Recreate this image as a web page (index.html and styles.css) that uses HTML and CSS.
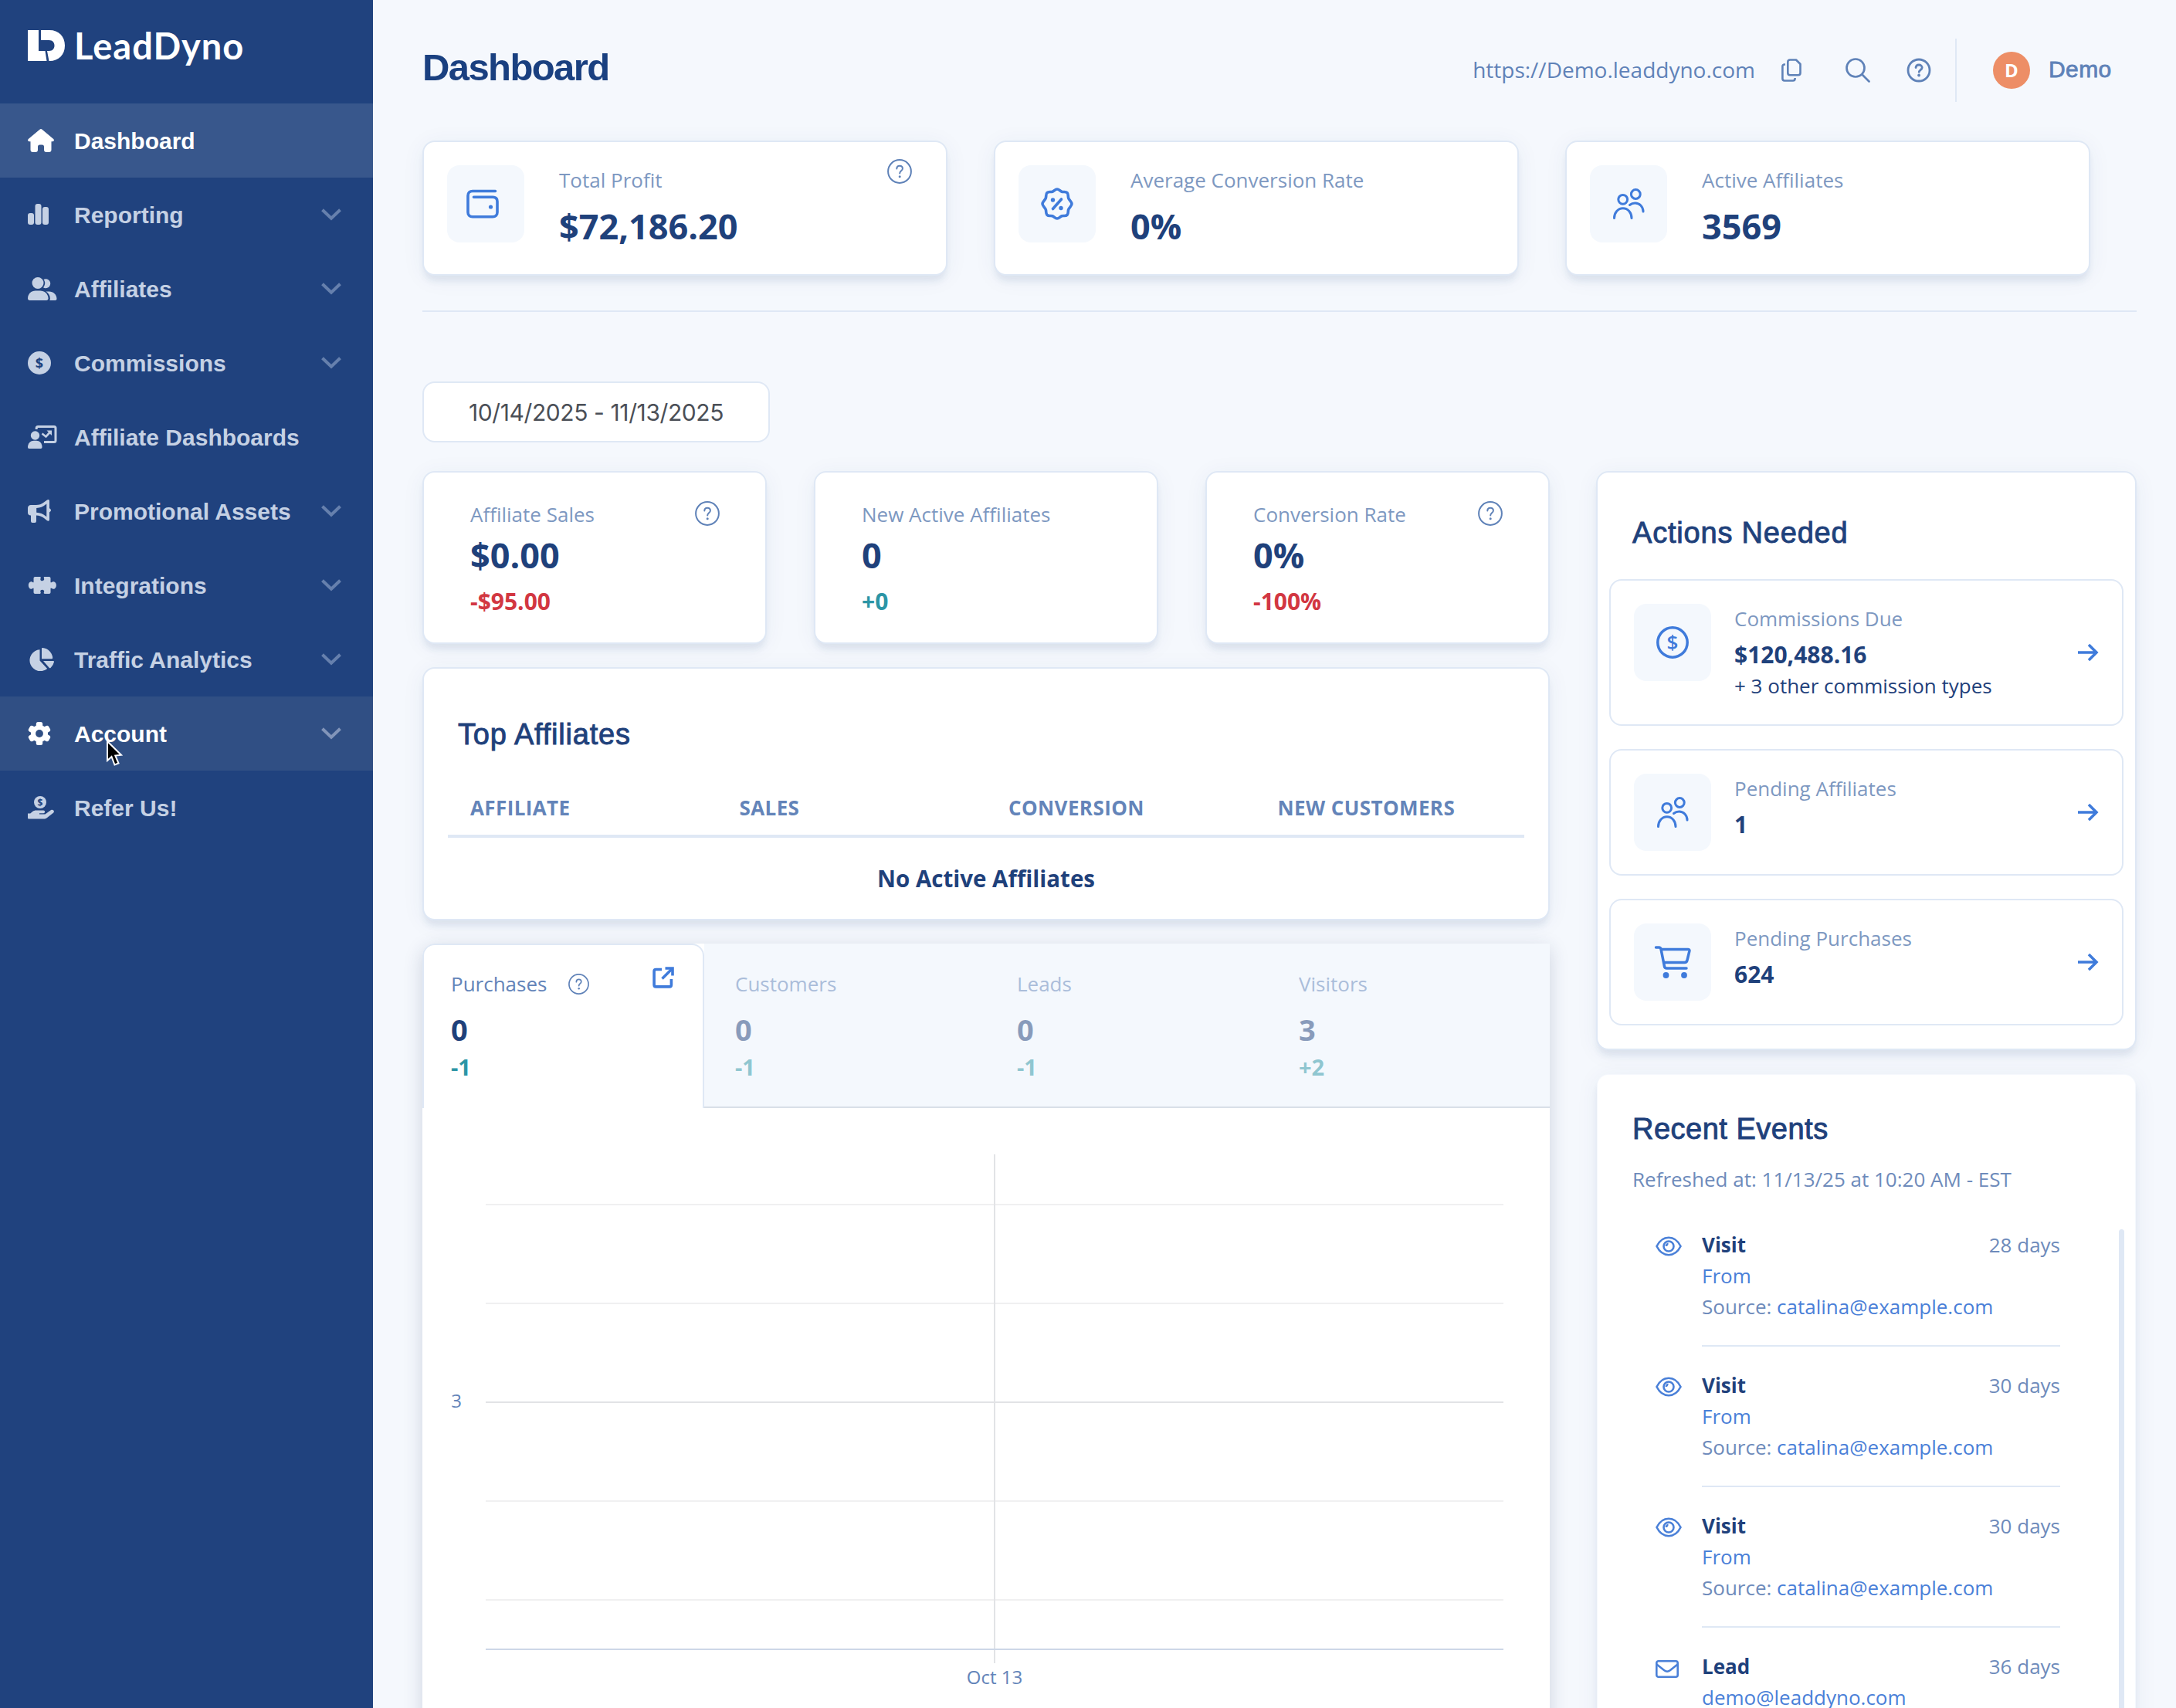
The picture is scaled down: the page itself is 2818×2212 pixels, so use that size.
FILE: index.html
```
<!DOCTYPE html>
<html lang="en">
<head>
  <meta charset="UTF-8">
  <meta name="viewport" content="width=device-width, initial-scale=1.0">
  <title>LeadDyno - Dashboard</title>
  <link rel="stylesheet" href="styles.css">
</head>
<body>
  <!-- shared icons -->
  <svg class="sprite" aria-hidden="true">
    <symbol id="chevron" viewBox="0 0 26 16"><path d="M1.500 1.800L13 12.800 24.500 1.800" fill="none" stroke="currentColor" stroke-width="4"/></symbol>
    <symbol id="help" viewBox="0 0 32 32">
      <circle cx="16" cy="16" r="14.900" fill="none" stroke="currentColor" stroke-width="2"/>
      <path d="M12.300 12.600c0-2.300 1.600-3.900 3.800-3.900s3.800 1.500 3.800 3.500c0 3.200-3.700 3.100-3.700 6.300" fill="none" stroke="currentColor" stroke-width="2" stroke-linecap="round"/>
      <circle cx="16.200" cy="22.800" r="1.500" fill="currentColor"/>
    </symbol>
    <symbol id="people" viewBox="0 0 42 42">
      <g fill="none" stroke="currentColor" stroke-width="3" stroke-linecap="round">
        <circle cx="13.700" cy="15.300" r="5.900"/>
        <circle cx="30.300" cy="8.500" r="5.900"/>
        <path d="M2.500 39.500c0-7 4.800-12.800 11.300-12.800S25 32.500 25 39.500"/>
        <path d="M22.500 22.500c2-1.600 4.500-2.500 7-2.500 6 0 10.500 4.800 10.500 11"/>
      </g>
    </symbol>
    <symbol id="arrow" viewBox="0 0 28 24"><path d="M1 12h23M15 2l10 10-10 10" fill="none" stroke="currentColor" stroke-width="3.600"/></symbol>
    <symbol id="eye" viewBox="0 0 34 28">
      <g fill="none" stroke="currentColor" stroke-width="2.600">
        <path d="M1.500 14C5 7 10.500 2.800 17 2.800S29 7 32.500 14C29 21 23.500 25.200 17 25.200S5 21 1.500 14z"/>
        <circle cx="17" cy="14" r="6.500"/>
      </g>
      <path d="M16.500 9.500a3.500 3.500 0 0 1-4 4.500c.2-2.500 1.700-4.200 4-4.500z" fill="currentColor"/>
    </symbol>
  </svg>

  <div class="app">
    <aside class="sidebar">
      <div class="brand">
        <svg width="48" height="40" viewBox="0 0 48 40" fill="#fff">
          <path d="M0 0h14v27h8.500l2 13H0z"/>
          <path d="M17 0h11c12 0 20 8 20 20s-8 20-20 20h-.5L25 27h2.500c4.500 0 7-2.800 7-7s-2.500-7-7-7H17z"/>
        </svg>
        <span>LeadDyno</span>
      </div>
      <nav>
        <a class="nav-item active">
          <span class="nav-icon"><svg width="34" height="30" viewBox="0 0 34 30" fill="currentColor"><path d="M15.400.7a2.500 2.500 0 0 1 3.200 0L33.200 13c1.400 1.200.6 3.200-1.200 3.200H30.500V27a3 3 0 0 1-3 3H24a3 3 0 0 1-3-3v-4a2.500 2.500 0 0 0-2.500-2.500h-3A2.500 2.500 0 0 0 13 23v4a3 3 0 0 1-3 3H6.500a3 3 0 0 1-3-3V16.200H2C.2 16.200-.6 14.200.8 13z"/></svg></span>
          <span class="nav-label">Dashboard</span>
        </a>
        <a class="nav-item">
          <span class="nav-icon"><svg width="28" height="28" viewBox="0 0 28 28" fill="currentColor"><rect y="12" width="8" height="15" rx="3"/><rect x="9.500" y="0" width="8" height="27" rx="3"/><rect x="19" y="4" width="8" height="23" rx="3"/></svg></span>
          <span class="nav-label">Reporting</span>
          <svg class="nav-chevron"><use href="#chevron"/></svg>
        </a>
        <a class="nav-item">
          <span class="nav-icon"><svg width="38" height="30" viewBox="0 0 38 30" fill="currentColor"><circle cx="13" cy="7.500" r="7.500"/><path d="M0 27.500C0 21.500 4.500 17.500 10 17.500h6c5.500 0 10.500 4 10.500 10 0 1.500-1 2.500-2.500 2.500H2.500C1 30 0 29 0 27.500z"/><path d="M20.500 2.900A6 6 0 1 1 20 13.300c1.400-1.600 2.200-3.600 2.200-5.800 0-1.700-.6-3.300-1.700-4.600z"/><path d="M23.500 18.500h4c5.500 0 10 4 10 9.500 0 1.300-.8 2-2 2h-7.300c.5-.8.700-1.600.7-2.600 0-3.500-2-6.700-5.400-8.900z"/></svg></span>
          <span class="nav-label">Affiliates</span>
          <svg class="nav-chevron"><use href="#chevron"/></svg>
        </a>
        <a class="nav-item">
          <span class="nav-icon"><svg width="30" height="30" viewBox="0 0 30 30"><circle cx="15" cy="15" r="15" fill="currentColor"/><text x="15" y="21.500" class="coin-text">$</text></svg></span>
          <span class="nav-label">Commissions</span>
          <svg class="nav-chevron"><use href="#chevron"/></svg>
        </a>
        <a class="nav-item">
          <span class="nav-icon"><svg width="38" height="30" viewBox="0 0 38 30" fill="currentColor"><circle cx="9.500" cy="13" r="5.700"/><path d="M0 28c0-5 3.500-8.300 8-8.300h3c4.500 0 7.500 3.300 7.500 8.300 0 1.200-.6 2-1.700 2H1.700C.6 30 0 29.200 0 28z"/><path d="M11.200 5V3.500c0-1.200.8-2 2-2h20.800c1.200 0 2 .8 2 2v16c0 1.200-.8 2-2 2H21" fill="none" stroke="currentColor" stroke-width="3"/><path d="M18.500 10.500l5 4 5.500-6" fill="none" stroke="currentColor" stroke-width="2.600"/><path d="M24.500 6.500h6.500v6.500z"/></svg></span>
          <span class="nav-label">Affiliate Dashboards</span>
        </a>
        <a class="nav-item">
          <span class="nav-icon"><svg width="30" height="30" viewBox="0 0 30 30" fill="currentColor"><path fill-rule="evenodd" d="M28 1.700v9.500c1.200.7 2 1.500 2 2.600s-.8 1.900-2 2.600V26c0 1.700-1.800 2.300-3 1.300l-4-3.200a17 17 0 0 0-10-3.600V28a2 2 0 0 1-2 2H6a2 2 0 0 1-2-2v-7.500A3.900 3.900 0 0 1 0 16.700V11c0-2.200 1.700-3.900 3.900-3.900h6.800c3.800 0 7.300-1.300 10.200-3.600L25 .5c1.300-1 3-.5 3 1.200zM24.300 5.500l-1 .8A20 20 0 0 1 11.200 11v5.800c4.400.2 8.600 1.800 12.100 4.600l1 .8z"/></svg></span>
          <span class="nav-label">Promotional Assets</span>
          <svg class="nav-chevron"><use href="#chevron"/></svg>
        </a>
        <a class="nav-item">
          <span class="nav-icon"><svg width="38" height="22" viewBox="0 0 38 23" fill="currentColor"><path d="M9 0h6.500c1 0 1.500 1 1 2-.8 1.700 0 3.500 2.200 3.500S21.800 3.700 21 2c-.5-1 0-2 1-2h6c1.200 0 2 .8 2 2v5.500h1.500C32.300 6.700 33 6.500 34 6.500c2.200 0 3.700 2.400 3.700 5s-1.500 5-3.700 5c-1 0-1.700-.2-2.500-1H30V21c0 1.200-.8 2-2 2h-6c-1 0-1.500-1-1-2 .8-1.700 0-3.500-2.300-3.500s-3 1.800-2.200 3.500c.5 1 0 2-1 2H9c-1.200 0-2-.8-2-2v-5.500H6c-.8.800-1.500 1-2.400 1-2.200 0-3.600-2.400-3.600-5s1.400-5 3.600-5c.9 0 1.600.2 2.400 1h1V2c0-1.200.8-2 2-2z"/></svg></span>
          <span class="nav-label">Integrations</span>
          <svg class="nav-chevron"><use href="#chevron"/></svg>
        </a>
        <a class="nav-item">
          <span class="nav-icon"><svg width="34" height="30" viewBox="0 0 34 30" fill="currentColor"><path d="M15.500 2.200v14.300l9.700 10.600A14 14 0 1 1 15.500 2.200z"/><path d="M18 1.300c0-.8.500-1.300 1.300-1.200A14 14 0 0 1 32.200 13c0 .8-.5 1.200-1.300 1.200H18z"/><path d="M20 17h13c.7 0 1.100.5 1 1.300a14 14 0 0 1-4.500 7.700c-.5.500-1.100.4-1.600-.1z"/></svg></span>
          <span class="nav-label">Traffic Analytics</span>
          <svg class="nav-chevron"><use href="#chevron"/></svg>
        </a>
        <a class="nav-item hover">
          <span class="nav-icon"><svg width="30" height="30" viewBox="0 0 30 30"><g fill="currentColor"><circle cx="15" cy="15" r="11"/><rect x="10.800" y="0" width="8.400" height="30" rx="2.500"/><rect x="10.800" y="0" width="8.400" height="30" rx="2.500" transform="rotate(60 15 15)"/><rect x="10.800" y="0" width="8.400" height="30" rx="2.500" transform="rotate(120 15 15)"/></g><circle cx="15" cy="15" r="4.900" fill="#304f84"/></svg></span>
          <span class="nav-label">Account</span>
          <svg class="nav-chevron"><use href="#chevron"/></svg>
          <svg class="cursor" width="24" height="36" viewBox="0 0 24 36"><path d="M2 2v25l5.500-5 4 10.500 5-2-4.200-10 7.700-.8z" fill="#000" stroke="#fff" stroke-width="2"/></svg>
        </a>
        <a class="nav-item">
          <span class="nav-icon"><svg width="34" height="30" viewBox="0 0 34 30" fill="currentColor"><circle cx="16" cy="8" r="8"/><text x="16" y="12.500" class="coin-text small">$</text><path d="M0 22.500h3.200l3-2.500c1.300-1 2.800-1.500 4.400-1.500h9.600c2.600 0 2.600 3.700 0 3.700H15v1.200h7.500l7.600-5.300c2.600-1.600 5.200 1.500 2.900 3.600l-8 6.300c-1.300 1-2.800 1.600-4.500 1.600H1.500C.6 29.600 0 29 0 28z"/></svg></span>
          <span class="nav-label">Refer Us!</span>
        </a>
      </nav>
    </aside>

    <main class="main">
      <header class="topbar">
        <h1>Dashboard</h1>
        <div class="topbar-tools">
          <span class="site-url">https://Demo.leaddyno.com</span>
          <svg class="copy" width="26" height="30" viewBox="0 0 26 30" fill="none" stroke="currentColor" stroke-width="2.600" stroke-linejoin="round"><path d="M11 1.500h8l5.500 5.500v11.500c0 1.700-1 2.700-2.700 2.700H11c-1.700 0-2.700-1-2.700-2.700V4.200c0-1.700 1-2.700 2.700-2.700z"/><path d="M5 7.500H4C2.400 7.500 1.400 8.500 1.400 10v15.800c0 1.700 1 2.700 2.700 2.700h10.800c1.700 0 2.700-1 2.700-2.700V25"/></svg>
          <svg class="search" width="32" height="32" viewBox="0 0 32 32" fill="none" stroke="currentColor" stroke-width="2.700" stroke-linecap="round"><circle cx="13" cy="13" r="11.500"/><path d="M21.500 21.500l9 9"/></svg>
          <svg class="top-help" width="32" height="32" viewBox="0 0 32 32"><circle cx="16" cy="16" r="14" fill="none" stroke="currentColor" stroke-width="2.800"/><path d="M12 12.500c.3-2.300 1.700-3.500 4-3.500s4.200 1.400 4.200 3.600c0 2.900-4 3-4 5.700" fill="none" stroke="currentColor" stroke-width="2.800" stroke-linecap="round"/><circle cx="16.100" cy="22.500" r="1.900" fill="currentColor"/></svg>
          <div class="user">
            <span class="avatar">D</span>
            <span class="user-name">Demo</span>
          </div>
        </div>
      </header>

      <section class="summary">
        <div class="card summary-card">
          <div class="icon-box wallet"><svg width="42" height="38" viewBox="0 0 42 38" fill="none" stroke="currentColor" stroke-width="3.600" stroke-linecap="round"><path d="M37.500 2.500H8c-3.700 0-6 2.300-6 6V30c0 3.500 2.300 5.700 6 5.700h26c3.700 0 6-2.200 6-5.700V16c0-3.600-2.300-5.700-6-5.700H9.500"/><circle cx="31.500" cy="23" r="2.600" fill="currentColor" stroke="none"/></svg></div>
          <div class="summary-text">
            <div class="label">Total Profit</div>
            <div class="value">$72,186.20</div>
          </div>
          <svg class="help"><use href="#help"/></svg>
        </div>
        <div class="card summary-card">
          <div class="icon-box"><svg width="42" height="42" viewBox="0 0 42 42" fill="none" stroke="currentColor" stroke-width="3.600" stroke-linecap="round" stroke-linejoin="round"><path d="M21 2c2.600 0 3.700 2.500 6 3.300 2.300.8 5-.6 7 1.300 1.900 1.900.9 4.700 1.700 7S40 18.400 40 21s-3.500 5-4.300 7.400c-.8 2.300.2 5.100-1.700 7-2 1.900-4.700.5-7 1.300-2.300.8-3.400 3.300-6 3.300s-3.700-2.500-6-3.300c-2.300-.8-5 .6-7-1.300-1.900-1.900-.9-4.700-1.700-7C5.500 26 2 23.600 2 21s3.500-5 4.300-7.400c.8-2.300-.2-5.100 1.700-7 2-1.900 4.700-.5 7-1.300C17.300 4.500 18.400 2 21 2z"/><path d="M26.500 15l-11 12.500"/><circle cx="15.500" cy="16" r="2.700" fill="currentColor" stroke="none"/><circle cx="26" cy="26.500" r="2.700" fill="currentColor" stroke="none"/></svg></div>
          <div class="summary-text">
            <div class="label">Average Conversion Rate</div>
            <div class="value">0%</div>
          </div>
        </div>
        <div class="card summary-card">
          <div class="icon-box"><svg width="42" height="42"><use href="#people"/></svg></div>
          <div class="summary-text">
            <div class="label">Active Affiliates</div>
            <div class="value">3569</div>
          </div>
        </div>
      </section>

      <div class="date-range">10/14/2025 - 11/13/2025</div>

      <div class="columns">
        <div class="col-left">
          <div class="stats">
            <div class="card stat">
              <div class="stat-head"><span class="label">Affiliate Sales</span><svg class="help"><use href="#help"/></svg></div>
              <div class="value">$0.00</div>
              <div class="delta down">-$95.00</div>
            </div>
            <div class="card stat">
              <div class="stat-head"><span class="label">New Active Affiliates</span></div>
              <div class="value">0</div>
              <div class="delta up">+0</div>
            </div>
            <div class="card stat">
              <div class="stat-head"><span class="label">Conversion Rate</span><svg class="help"><use href="#help"/></svg></div>
              <div class="value">0%</div>
              <div class="delta down">-100%</div>
            </div>
          </div>

          <div class="card top-affiliates">
            <h2>Top Affiliates</h2>
            <table>
              <thead>
                <tr>
                  <th>Affiliate</th>
                  <th>Sales</th>
                  <th>Conversion</th>
                  <th>New Customers</th>
                </tr>
              </thead>
              <tbody>
                <tr>
                  <td colspan="4">No Active Affiliates</td>
                </tr>
              </tbody>
            </table>
          </div>

          <div class="chart-card">
            <div class="tabs">
              <div class="tab selected">
                <div class="tab-label">Purchases <svg class="help"><use href="#help"/></svg>
                  <svg class="open" width="28" height="28" viewBox="0 0 28 28" fill="none" stroke="currentColor" stroke-width="3.600"><path d="M12 3.500H4.500c-1.500 0-2.400.9-2.400 2.400V23.500c0 1.500.9 2.400 2.400 2.400H22c1.500 0 2.400-.9 2.400-2.400V16"/><path d="M12.500 15.500L25 3"/><path d="M16.500 2h9.500v9.500"/></svg>
                </div>
                <div class="tab-value">0</div>
                <div class="tab-delta">-1</div>
              </div>
              <div class="tab">
                <div class="tab-label">Customers</div>
                <div class="tab-value">0</div>
                <div class="tab-delta">-1</div>
              </div>
              <div class="tab">
                <div class="tab-label">Leads</div>
                <div class="tab-value">0</div>
                <div class="tab-delta">-1</div>
              </div>
              <div class="tab">
                <div class="tab-label">Visitors</div>
                <div class="tab-value">3</div>
                <div class="tab-delta">+2</div>
              </div>
            </div>
            <svg class="chart" width="1460" height="777" viewBox="0 0 1460 777">
              <g class="grid-minor">
                <path d="M82 125H1400M82 253H1400M82 509H1400M82 637H1400"/>
              </g>
              <path class="grid-major" d="M82 381H1400M741 60V719"/>
              <path class="axis" d="M82 701H1400"/>
              <text x="51" y="388" text-anchor="end">3</text>
              <text x="741" y="746" text-anchor="middle">Oct 13</text>
            </svg>
          </div>
        </div>

        <div class="col-right">
          <div class="card actions">
            <h2>Actions Needed</h2>
            <div class="action">
              <div class="icon-box"><svg width="42" height="42" viewBox="0 0 42 42"><circle cx="21" cy="21" r="19.200" fill="none" stroke="currentColor" stroke-width="3.500"/><text x="21" y="30.200" class="dollar">$</text></svg></div>
              <div class="action-text">
                <div class="label">Commissions Due</div>
                <div class="action-value">$120,488.16</div>
                <div class="action-note">+ 3 other commission types</div>
              </div>
              <svg class="arrow"><use href="#arrow"/></svg>
            </div>
            <div class="action">
              <div class="icon-box"><svg width="42" height="42"><use href="#people"/></svg></div>
              <div class="action-text">
                <div class="label">Pending Affiliates</div>
                <div class="action-value">1</div>
              </div>
              <svg class="arrow"><use href="#arrow"/></svg>
            </div>
            <div class="action">
              <div class="icon-box"><svg width="48" height="42" viewBox="0 0 48 42" fill="none" stroke="currentColor" stroke-width="3.500" stroke-linecap="round" stroke-linejoin="round"><path d="M2.500 2h4c1.500 0 2.200.8 2.500 2.200l4.500 22.500c.3 1.600 1.300 2.400 3 2.400H42"/><path d="M9.500 4.500H44c1.500 0 2.200.8 1.900 2.200L43 18.500c-.4 1.800-1.700 3-3.500 3H13"/><circle cx="15.500" cy="38" r="3.900" fill="currentColor" stroke="none"/><circle cx="39" cy="38" r="3.900" fill="currentColor" stroke="none"/></svg></div>
              <div class="action-text">
                <div class="label">Pending Purchases</div>
                <div class="action-value">624</div>
              </div>
              <svg class="arrow"><use href="#arrow"/></svg>
            </div>
          </div>

          <div class="card recent">
            <h2>Recent Events</h2>
            <div class="refreshed">Refreshed at: 11/13/25 at 10:20 AM - EST</div>
            <div class="events">
              <div class="event-list">
                <div class="event">
                  <svg class="event-icon"><use href="#eye"/></svg>
                  <div class="event-body">
                    <div class="event-head"><b>Visit</b><span>28 days</span></div>
                    <div><a>From</a></div>
                    <div>Source: <a>catalina@example.com</a></div>
                  </div>
                </div>
                <div class="event">
                  <svg class="event-icon"><use href="#eye"/></svg>
                  <div class="event-body">
                    <div class="event-head"><b>Visit</b><span>30 days</span></div>
                    <div><a>From</a></div>
                    <div>Source: <a>catalina@example.com</a></div>
                  </div>
                </div>
                <div class="event">
                  <svg class="event-icon"><use href="#eye"/></svg>
                  <div class="event-body">
                    <div class="event-head"><b>Visit</b><span>30 days</span></div>
                    <div><a>From</a></div>
                    <div>Source: <a>catalina@example.com</a></div>
                  </div>
                </div>
                <div class="event">
                  <svg class="event-icon mail" viewBox="0 0 30 23" fill="none" stroke="currentColor" stroke-width="2.600"><rect x="1.300" y="1.300" width="27.400" height="20.400" rx="2.500"/><path d="M1.500 5.500l9.800 7.800c2.500 1.900 5 1.900 7.500 0l9.700-7.800"/></svg>
                  <div class="event-body">
                    <div class="event-head"><b>Lead</b><span>36 days</span></div>
                    <div><a>demo@leaddyno.com</a></div>
                  </div>
                </div>
              </div>
              <div class="scrollbar"></div>
            </div>
          </div>
        </div>
      </div>
    </main>
  </div>
</body>
</html>
```

FILE: styles.css
```
* {
  box-sizing: border-box;
}

body {
  margin: 0;
  height: 2212px;
  overflow: hidden;
  background: #f5f8fd;
  font-family: "Open Sans", sans-serif;
  font-size: 26px;
  color: #1f417b;
}

.sprite {
  display: none;
}

.app {
  display: flex;
  height: 2212px;
}

/* sidebar */
.sidebar {
  width: 483px;
  flex-shrink: 0;
  background: #20427e;
}

.brand {
  display: flex;
  align-items: center;
  gap: 12px;
  height: 134px;
  padding: 0 36px 16px;
  color: #fff;
  font: bold 47px/1 Lato, sans-serif;
  letter-spacing: 1px;
}

.nav-item {
  display: flex;
  align-items: center;
  position: relative;
  height: 96px;
  padding: 0 41px 0 36px;
  color: #c5d1e4;
  font: bold 30px "Liberation Sans", Arial, sans-serif;
}

.nav-item.active {
  background: #38578c;
  color: #fff;
}

.nav-item.hover {
  background: #304f84;
  color: #fff;
}

.nav-icon {
  width: 60px;
  display: flex;
}

.nav-label {
  flex: 1;
  padding-top: 2px;
  white-space: nowrap;
}

.nav-chevron {
  width: 26px;
  height: 16px;
  color: #6680ad;
}

.hover .nav-chevron {
  color: #8295b9;
}

.coin-text {
  font: bold 18px "Open Sans", sans-serif;
  fill: #20427e;
  text-anchor: middle;
}

.coin-text.small {
  font-size: 12px;
}

.cursor {
  position: absolute;
  left: 137px;
  top: 56px;
}

/* main */
.main {
  width: 2284px;
  padding-left: 64px;
}

.topbar {
  display: flex;
  justify-content: space-between;
  height: 182px;
}

h1 {
  margin: 59px 0 0;
  font: bold 49px/56px "Liberation Sans", Arial, sans-serif;
  letter-spacing: -1.6px;
  color: #1a4080;
}

.topbar-tools {
  display: flex;
  align-items: center;
  height: 82px;
  margin-top: 50px;
  color: #5f82b8;
}

.site-url {
  padding-bottom: 2px;
  font-size: 28px;
}

.copy {
  margin-left: 34px;
}

.search {
  margin-left: 57px;
}

.top-help {
  margin-left: 47px;
}

.user {
  display: flex;
  align-items: center;
  height: 82px;
  width: 235px;
  margin-left: 31px;
  padding-left: 47px;
  border-left: 2px solid #dfe8f5;
}

.avatar {
  width: 48px;
  height: 48px;
  border-radius: 50%;
  background: #ed8e66;
  color: #fff;
  font-size: 24px;
  font-weight: 700;
  line-height: 48px;
  text-align: center;
}

.user-name {
  margin-left: 24px;
  padding-bottom: 2px;
  font: 30px "Liberation Sans", Arial, sans-serif;
  letter-spacing: 0.4px;
  -webkit-text-stroke: 0.8px;
}

.card {
  background: #fff;
  border: 2px solid #dfe8f5;
  border-radius: 16px;
  box-shadow: 0 9px 8px -2px rgba(31, 65, 123, 0.09), 0 4px 30px rgba(31, 65, 123, 0.06);
}

.icon-box {
  display: flex;
  align-items: center;
  justify-content: center;
  flex-shrink: 0;
  width: 100px;
  height: 100px;
  border-radius: 16px;
  background: #f4f8fd;
  color: #3f7bdb;
}

.icon-box.wallet {
  padding-right: 8px;
}

.label {
  line-height: 36px;
  color: #7d98c1;
}

.value {
  font-size: 45px;
  font-weight: 700;
  line-height: 60px;
}

.help {
  width: 32px;
  height: 32px;
  color: #5f82b8;
}

.summary {
  display: flex;
  gap: 60px;
  padding-bottom: 45px;
  border-bottom: 2px solid #dfe8f5;
}

.summary-card {
  display: flex;
  width: 680px;
  height: 175px;
  padding: 30px;
}

.summary-text {
  flex: 1;
  margin: 1px 0 0 45px;
}

.summary-text .value {
  margin-top: 12px;
}

.summary-card .help {
  margin: -8px 14px 0 0;
}

.date-range {
  width: 450px;
  height: 79px;
  margin-top: 90px;
  padding-left: 58px;
  border: 2px solid #dfe8f5;
  border-radius: 16px;
  background: #fff;
  color: #4b4f57;
  font: 30px/77px Inter, sans-serif;
  letter-spacing: -0.4px;
}

.columns {
  display: flex;
  gap: 60px;
  margin-top: 37px;
}

.col-left {
  width: 1460px;
}

.col-right {
  width: 700px;
}

.stats {
  display: flex;
  gap: 61px;
}

.stat {
  width: 446px;
  height: 224px;
  padding: 36px 59px 0 60px;
}

.stat-head {
  display: flex;
  justify-content: space-between;
  align-items: center;
}

.stat-head .help {
  margin-top: -2px;
}

.stat .value {
  margin-top: 5px;
}

.delta {
  margin-top: 10px;
  font-size: 30px;
  font-weight: 700;
  line-height: 40px;
}

.delta.down {
  color: #d23742;
}

.delta.up {
  color: #2c95a5;
}

h2 {
  margin: 0;
  font: 38px/44px "Liberation Sans", Arial, sans-serif;
  letter-spacing: 0.8px;
  -webkit-text-stroke: 0.9px;
}

.top-affiliates {
  height: 328px;
  margin-top: 30px;
  padding: 63px 31px 0;
}

.top-affiliates h2 {
  margin: 0 13px 55px;
}

table {
  width: 100%;
  table-layout: fixed;
  border-collapse: collapse;
}

th {
  padding: 0 0 17px 29px;
  border-bottom: 4px solid #dfe8f5;
  color: #6384b9;
  font-weight: 700;
  line-height: 36px;
  letter-spacing: 0.4px;
  text-align: left;
  text-transform: uppercase;
}

td {
  padding-top: 33px;
  font-size: 29.500px;
  font-weight: 700;
  line-height: 40px;
  text-align: center;
}

/* chart with tabs */
.chart-card {
  height: 1020px;
  margin-top: 30px;
  border-radius: 16px 0 0 0;
  background: #fff;
  box-shadow: 0 6px 24px rgba(31, 50, 90, 0.18);
}

.tabs {
  display: flex;
  height: 213px;
}

.tab {
  width: 365px;
  padding: 34px 0 0 40px;
  background: #f4f8fd;
  border-bottom: 2px solid #d9dfe8;
}

.tab.selected {
  padding: 32px 0 0 35px;
  background: #fff;
  border: 2px solid #dfe8f5;
  border-bottom: none;
  border-radius: 16px 16px 0 0;
}

.tab-label {
  display: flex;
  align-items: center;
  line-height: 36px;
  color: #6384b9;
}

.tab-label .help {
  width: 27px;
  height: 27px;
  margin-left: 28px;
}

.tab-label .open {
  margin: -16px 0 0 82px;
  color: #3f7bdb;
}

.tab-value {
  margin-top: 16px;
  font-size: 38px;
  font-weight: 700;
  line-height: 50px;
}

.tab-delta {
  margin-top: 6px;
  color: #2c95a5;
  font-size: 29px;
  font-weight: 700;
  line-height: 36px;
}

.tab:not(.selected) > div {
  opacity: 0.5;
}

.chart {
  display: block;
  fill: none;
  stroke-width: 2;
}

.grid-minor {
  stroke: #f0f0f1;
}

.grid-major {
  stroke: #e2e3e6;
}

.axis {
  stroke: #cdd7e7;
}

.chart text {
  fill: #6384b9;
  font-size: 24px;
}

/* right column */
.actions {
  height: 750px;
  padding: 56px 15px 0;
}

.actions h2 {
  margin: 0 30px 38px;
}

.action {
  display: flex;
  align-items: center;
  height: 164px;
  margin-bottom: 30px;
  padding: 30px;
  border: 2px solid #dfe8f5;
  border-radius: 16px;
}

.action:nth-child(2) {
  height: 190px;
}

.action .icon-box,
.action-text {
  align-self: flex-start;
}

.action-text {
  flex: 1;
  margin: 1px 0 0 30px;
}

.action-value {
  margin-top: 7px;
  font-size: 30px;
  font-weight: 700;
  line-height: 44px;
}

.action-note {
  line-height: 36px;
}

.arrow {
  width: 28px;
  height: 24px;
  color: #3f7bdb;
}

.dollar {
  font: 600 26px "Open Sans", sans-serif;
  fill: currentColor;
  text-anchor: middle;
}

.recent {
  height: 900px;
  margin-top: 30px;
  padding: 48px 14px 0 45px;
  border-color: transparent;
  background-clip: padding-box;
}

.recent h2 {
  letter-spacing: 0.5px;
}

.refreshed {
  margin-top: 25px;
  line-height: 36px;
  color: #6e8bbb;
}

.events {
  display: flex;
  justify-content: space-between;
  height: 700px;
  margin-top: 47px;
}

.event-list {
  width: 524px;
  margin-left: 30px;
}

.event {
  display: flex;
  line-height: 40px;
  color: #6e8bbb;
}

.event-icon {
  width: 34px;
  height: 28px;
  margin: 8px 26px 0 0;
  color: #4a80d8;
}

.event-icon.mail {
  width: 30px;
  height: 23px;
  margin: 12px 30px 0 0;
}

.event-body {
  flex: 1;
  margin-bottom: 30px;
  padding-bottom: 30px;
  border-bottom: 2px solid #dfe8f5;
}

.event-head {
  display: flex;
  justify-content: space-between;
}

.event b {
  color: #1f417b;
}

.event a {
  color: #4a80d8;
}

.scrollbar {
  width: 7px;
  border-radius: 4px 4px 0 0;
  background: #dfe8f5;
}
```
